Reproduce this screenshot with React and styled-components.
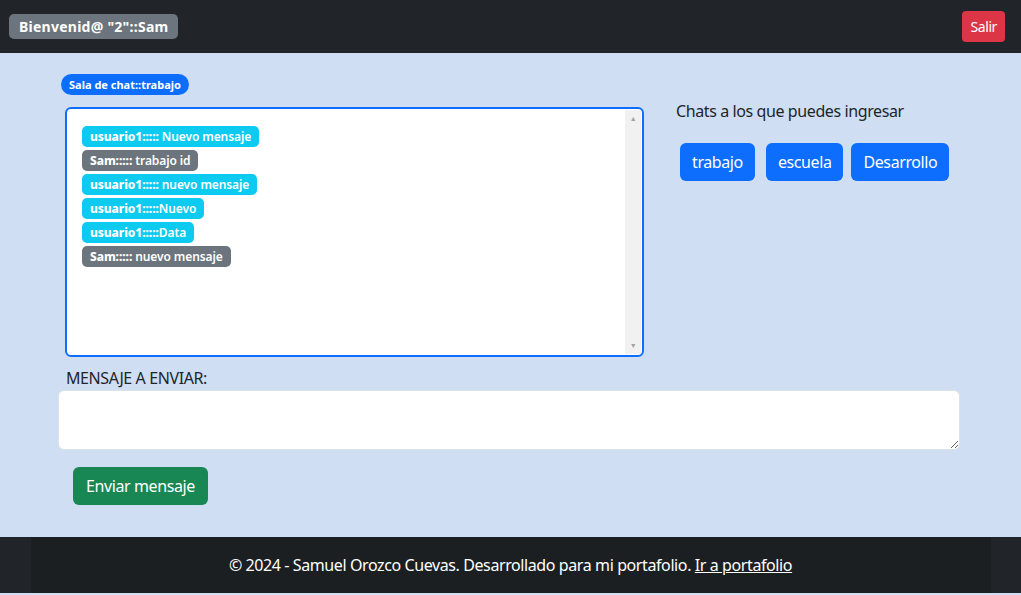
import React from 'react'
import styled, { createGlobalStyle } from 'styled-components'

const Global = createGlobalStyle`
  html, body { margin: 0; padding: 0; }
  body {
    font-family: "Noto Sans", "Open Sans", sans-serif;
    font-size: 16px;
    color: #212529;
    background: #cfdef3;
  }
`

const Page = styled.div`
  width: 1021px;
  height: 595px;
  display: flex;
  flex-direction: column;
  background: #cfdef3;
  letter-spacing: -0.4px;
`

const Navbar = styled.nav`
  height: 53px;
  flex-shrink: 0;
  background: #212529;
  display: flex;
  align-items: center;
  justify-content: space-between;
  padding: 0 16px 0 9px;
  box-sizing: border-box;
`

const Badge = styled.span`
  display: inline-flex;
  align-items: center;
  color: #fff;
  font-weight: 700;
  white-space: nowrap;
  background: ${p => p.$bg || '#6c757d'};
  font-size: ${p => p.$size || 12}px;
  height: ${p => p.$h || 21}px;
  padding: 0 ${p => p.$px || 8}px;
  border-radius: ${p => p.$radius || 5}px;
  box-sizing: border-box;
  letter-spacing: ${p => p.$ls ?? -0.1}px;
`

const Btn = styled.button`
  border: none;
  color: #fff;
  font-family: inherit;
  letter-spacing: inherit;
  background: ${p => p.$bg || '#0d6efd'};
  font-size: ${p => p.$size || 16}px;
  height: ${p => p.$h || 38}px;
  padding: 0 ${p => p.$px || 12}px;
  border-radius: ${p => p.$radius || 6}px;
  cursor: pointer;
`

const Main = styled.main`
  flex: 1;
  padding: 21px 0 0 58px;
  box-sizing: border-box;
  width: 960px;
`

const RoomTag = styled.div`
  display: flex;
  margin-left: 3px;
`

const Row = styled.div`
  display: flex;
  margin-top: 12px;
`

const ChatBox = styled.div`
  flex-shrink: 0;
  margin-left: 7px;
  width: 579px;
  height: 250px;
  box-sizing: border-box;
  border: 2px solid #0d6efd;
  border-radius: 6px;
  background: #fff;
  display: flex;
  overflow: hidden;
`

const Messages = styled.div`
  flex: 1;
  padding: 17px 15px;
  display: flex;
  flex-direction: column;
  align-items: flex-start;
  gap: 3px;
`

const ScrollTrack = styled.div`
  width: 16px;
  margin: 1px 1px 1px 0;
  background: #f1f1f1;
  display: flex;
  flex-direction: column;
  justify-content: space-between;
  align-items: center;
  color: #a3a3a3;
  font-size: 7px;
  line-height: 1;
  padding: 5px 0;
  box-sizing: border-box;
`

const Name = styled.span`
  font-weight: 800;
`

const Body = styled.span`
  font-weight: 600;
`

const Side = styled.aside`
  margin-left: 32px;
  margin-top: -8px;
`

const SideTitle = styled.p`
  margin: 0;
  line-height: 24px;
`

const RoomList = styled.div`
  display: flex;
  gap: 8px;
  margin-top: 20px;
  margin-left: 4px;
  & > button:first-child { margin-right: 3px; }
`

const Label = styled.label`
  display: block;
  margin: 9px 0 0 8px;
  line-height: 24px;
`

const TextArea = styled.textarea`
  display: block;
  width: 902px;
  height: 60px;
  box-sizing: border-box;
  border: 1px solid #dee2e6;
  border-radius: 6px;
  background: #fff;
  resize: vertical;
  font-family: inherit;
  font-size: 16px;
  padding: 6px 12px;
  outline: none;
`

const SendRow = styled.div`
  margin: 17px 0 0 15px;
`

const Footer = styled.footer`
  height: 56px;
  flex-shrink: 0;
  margin-bottom: 2px;
  background: #212529;
  display: flex;
  justify-content: center;
`

const FooterInner = styled.div`
  width: 960px;
  background: #1c1f22;
  color: #fff;
  display: flex;
  align-items: center;
  justify-content: center;
  a { color: #fff; text-decoration: underline; }
`

const messages = [
  { who: 'usuario1', text: ' Nuevo mensaje', mine: false },
  { who: 'Sam', text: ' trabajo id', mine: true },
  { who: 'usuario1', text: ' nuevo mensaje', mine: false },
  { who: 'usuario1', text: 'Nuevo', mine: false },
  { who: 'usuario1', text: 'Data', mine: false },
  { who: 'Sam', text: ' nuevo mensaje', mine: true },
]

const rooms = ['trabajo', 'escuela', 'Desarrollo']

export default function App() {
  return (
    <Page>
      <Global />
      <Navbar>
        <Badge $size={14} $h={25} $px={10} $radius={5} $ls={0.25}>Bienvenid@ "2"::Sam</Badge>
        <Btn $bg="#dc3545" $size={14} $h={31} $px={8} $radius={4}>Salir</Btn>
      </Navbar>
      <Main>
        <RoomTag>
          <Badge $bg="#0d6efd" $size={11} $radius={11} $px={8} $ls={0}>
            Sala de chat::trabajo
          </Badge>
        </RoomTag>
        <Row>
          <ChatBox>
            <Messages>
              {messages.map((m, i) => (
                <Badge key={i} $bg={m.mine ? '#6c757d' : '#0dcaf0'}>
                  <Name>{m.who}:::::</Name>
                  <Body>{m.text.startsWith(' ') ? '\u00a0' : ''}{m.text.trim()}</Body>
                </Badge>
              ))}
            </Messages>
            <ScrollTrack>
              <span>▲</span>
              <span>▼</span>
            </ScrollTrack>
          </ChatBox>
          <Side>
            <SideTitle>Chats a los que puedes ingresar</SideTitle>
            <RoomList>
              {rooms.map(r => (
                <Btn key={r}>{r}</Btn>
              ))}
            </RoomList>
          </Side>
        </Row>
        <Label>MENSAJE A ENVIAR:</Label>
        <TextArea />
        <SendRow>
          <Btn $bg="#198754" $px={13}>Enviar mensaje</Btn>
        </SendRow>
      </Main>
      <Footer>
        <FooterInner>
          © 2024 - Samuel Orozco Cuevas. Desarrollado para mi portafolio.&nbsp;<a href="#">Ir a portafolio</a>
        </FooterInner>
      </Footer>
    </Page>
  )
}
